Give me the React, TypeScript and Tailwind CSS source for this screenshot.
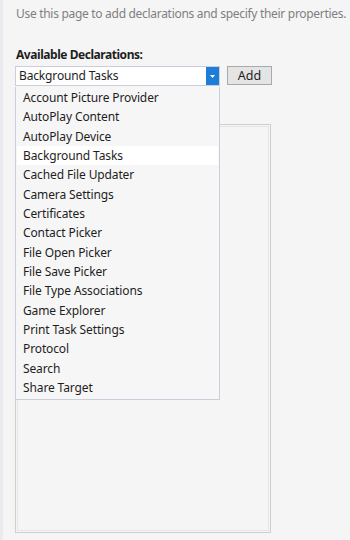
import React from "react";

const items = [
  "Account Picture Provider",
  "AutoPlay Content",
  "AutoPlay Device",
  "Background Tasks",
  "Cached File Updater",
  "Camera Settings",
  "Certificates",
  "Contact Picker",
  "File Open Picker",
  "File Save Picker",
  "File Type Associations",
  "Game Explorer",
  "Print Task Settings",
  "Protocol",
  "Search",
  "Share Target",
];

export default function App() {
  return (
    <div
      className="relative w-[350px] h-[540px] overflow-hidden bg-[#f5f5f5] border-l-[3px] border-[#ebebef] text-[12px]"
      style={{ fontFamily: '"Noto Sans", "Open Sans", sans-serif' }}
    >
      <div className="pl-[13px] pt-[5px] h-[20px] leading-[18px] text-[#7f7f7f] whitespace-nowrap text-[12px] tracking-[-0.3px]">
        Use this page to add declarations and specify their properties.
      </div>
      <div className="pl-[13px] mt-[26px] leading-[18px] font-bold text-[#1e1e1e] tracking-[-0.45px]">
        Available Declarations:
      </div>
      <div className="flex items-start gap-[7px] ml-[12px] mt-[2px]">
        <div className="flex w-[205px] h-[20px] bg-white border border-[#cccedb]">
          <div className="flex-1 pl-[3px] leading-[18px] text-[#1e1e1e] tracking-[-0.15px]">Background Tasks</div>
          <div className="w-[13px] h-[18px] bg-[#1c7ed6] flex items-center justify-center">
            <svg width="5" height="3" viewBox="0 0 5 3">
              <path d="M0 0 H5 L2.5 3 Z" fill="#ffffff" />
            </svg>
          </div>
        </div>
        <div className="w-[45px] h-[19px] bg-[#e4e4e4] border border-[#a9a9a9] text-center leading-[17px] text-[#1e1e1e] text-[12.5px]">
          Add
        </div>
      </div>
      <div className="ml-[12px] mt-[38px] w-[256px] h-[409px] border border-[#cfcfcf] p-[1px]">
        <div className="w-full h-full border border-[#e6e6e6]" />
      </div>
      <div className="absolute left-[12px] top-[87px] w-[205px] h-[313px] bg-[#f6f6f6] border border-[#cccedb] border-t-0 py-[1px] px-[1px]">
        {items.map((it) => (
          <div
            key={it}
            className={`h-[19.35px] leading-[19px] pl-[6px] text-[#1e1e1e] tracking-[-0.12px] ${
              it === "Background Tasks" ? "bg-white" : ""
            }`}
          >
            {it}
          </div>
        ))}
      </div>
    </div>
  );
}
